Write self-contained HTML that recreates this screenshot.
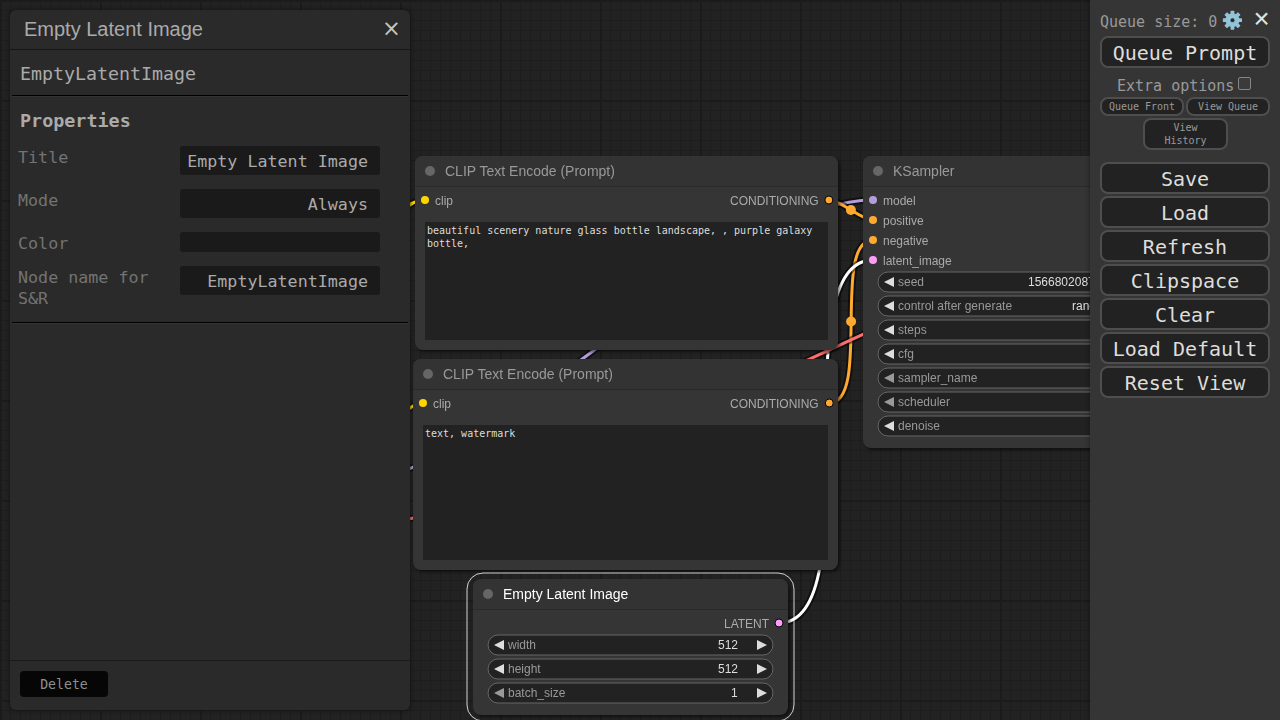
<!DOCTYPE html>
<html lang="en">
<head>
<meta charset="utf-8">
<title>ComfyUI</title>
<style>
*{box-sizing:border-box}
html,body{margin:0;padding:0;width:1280px;height:720px;overflow:hidden;background:#222}
body{position:relative;font-family:"Liberation Sans",sans-serif;color:#aaa}
.mono{font-family:"DejaVu Sans Mono","Liberation Mono",monospace}
#canvas{position:absolute;left:0;top:0;width:1280px;height:720px;overflow:hidden;background-color:#222;
 background-image:
  linear-gradient(to right,#1b1b1b 0,#1b1b1b 2px,transparent 2px),
  linear-gradient(to bottom,#1b1b1b 0,#1b1b1b 2px,transparent 2px),
  linear-gradient(to right,#1d1d1d 0,#1d1d1d 1px,transparent 1px),
  linear-gradient(to bottom,#1d1d1d 0,#1d1d1d 1px,transparent 1px);
 background-size:100px 100px,100px 100px,10px 10px,10px 10px;
 background-position:0 0,0 0,0 0,0 0}
#links{position:absolute;left:0;top:0}
.node{position:absolute;background:#353535;border-radius:8px;box-shadow:2px 2px 3px rgba(0,0,0,.5)}
.node .tt{position:absolute;left:0;top:0;right:0;height:30px;background:#333;border-radius:8px 8px 0 0}
.node .tt:after{content:"";position:absolute;left:0;right:0;top:30px;height:1px;background:#2a2a2a}
.node .tt b{position:absolute;left:10px;top:10px;width:10px;height:10px;border-radius:50%;background:#666}
.node .tt span{position:absolute;left:30px;top:7px;font:14px/16px "Liberation Sans",sans-serif;color:#999;white-space:nowrap}
i.dot{position:absolute;width:8px;height:8px;border-radius:50%}
svg.dot{position:absolute}
.node .tt span,.sl,.wl,.wv{will-change:transform}
.sl{position:absolute;font:12px/14px "Liberation Sans",sans-serif;color:#aaa;white-space:nowrap}
.sl.r{text-align:right}
.ta{position:absolute;display:block;margin:0;border:none;outline:none;resize:none;background:#222;color:#ddd;font:10px/13px "DejaVu Sans Mono","Liberation Mono",monospace;padding:2px;white-space:pre-wrap;overflow:hidden}
.wg{position:absolute;height:20px;font:12px/14px "Liberation Sans",sans-serif}
.wg .ar{position:absolute;left:-1px;top:-1px}
.wg .wl{position:absolute;left:20px;top:3px;color:#999;white-space:nowrap}
.wg .wv{position:absolute;right:35px;top:3px;color:#ddd;white-space:nowrap}
#sel{position:absolute;left:460px;top:566px}
/* panel */
#panel{position:absolute;left:10px;top:10px;width:400px;height:700px;background:#2a2a2a;border-radius:6px;box-shadow:0 0 4px #111;color:#aaa}
#panel .hd{position:absolute;left:0;top:0;width:400px;height:40px;border-bottom:1px solid #161616}
#panel .hd .t{position:absolute;left:14px;top:8px;font:20px/23px "Liberation Sans",sans-serif;color:#aaa;white-space:nowrap}
#panel .hd .x{position:absolute;left:368.5px;top:5.4px;width:26px;height:26px;font:22.5px/26px "DejaVu Sans","Liberation Sans",sans-serif;color:#c4c4c4;text-align:center}
#panel .nt{position:absolute;left:10px;top:52px;font-size:18.3px;line-height:24px;color:#aaa;white-space:nowrap}
#panel .sep{position:absolute;left:2px;width:396px;height:2px;border-top:1px solid #000;border-bottom:1px solid #333}
#panel h3{position:absolute;left:10px;top:99px;margin:0;font-size:18.4px;line-height:24px;font-weight:bold;color:#aaa}
.pn{position:absolute;left:8px;font-size:16.7px;line-height:21px;color:#737373;width:160px}
.pv{position:absolute;left:170px;width:200px;height:29px;background:#1a1a1a;border-radius:3px;font-size:16.7px;line-height:20px;color:#aaa;text-align:right;padding:5px 12px 4px 4px;white-space:nowrap}
#panel .ft{position:absolute;left:0;top:650px;width:400px;height:50px;border-top:1px solid #1a1a1a}
#panel .btn{position:absolute;left:10px;top:10px;width:88px;height:26px;background:#060606;border:0;border-radius:4px;color:#8e8e8e;font-size:13.2px;line-height:26px;padding:1px 0 0;text-align:center}
/* menu */
#menu{position:absolute;left:1090px;top:0;width:190px;height:720px;background:#353535;color:#999}
#msh{position:absolute;left:1084px;top:0;width:6px;height:720px;background:linear-gradient(to right,rgba(0,0,0,0),rgba(0,0,0,.05) 50%,rgba(0,0,0,.22))}
#menu .q{position:absolute;left:10px;top:12px;font-size:15px;line-height:20px;white-space:nowrap;color:#999}
button{margin:0;font-family:inherit;display:block;cursor:pointer}
.mb{position:absolute;left:10px;width:170px;height:32px;background:#222;border:2px solid #4e4e4e;border-radius:8px;color:#ddd;font-size:20px;line-height:28px;padding:1px 0 0;text-align:center;white-space:nowrap}
.sb{position:absolute;background:#222;border:2px solid #4e4e4e;border-radius:8px;color:#999;font-size:10px;line-height:13px;text-align:center;padding:0}
#menu .mx{position:absolute;left:158.6px;top:5.4px;width:26px;height:28px;font:27.6px/28px "Liberation Sans",sans-serif;color:#e2e2e2;text-align:center}
#menu .eo{position:absolute;left:27px;top:76px;font-size:15px;line-height:20px;color:#999;white-space:nowrap}
#menu .cb{position:absolute;left:148px;top:77px;width:13px;height:13px;margin:0;-webkit-appearance:none;appearance:none;border:1px solid #858585;border-radius:2px;background:#3b3b3b}
</style>
</head>
<body>
<div id="canvas">
<svg id="links" width="1280" height="720" viewBox="0 0 1280 720">
<path d="M332.0 508.0C366.7 508.0 388.3 403.0 423.0 403.0" stroke="rgba(0,0,0,0.5)" stroke-width="7" fill="none"/><path d="M332.0 508.0C366.7 508.0 388.3 403.0 423.0 403.0" stroke="#FFD500" stroke-width="3" fill="none"/><circle cx="377.5" cy="455.5" r="5" fill="#FFD500"/>
<path d="M332.0 508.0C412.4 508.0 344.6 200.0 425.0 200.0" stroke="rgba(0,0,0,0.5)" stroke-width="7" fill="none"/><path d="M332.0 508.0C412.4 508.0 344.6 200.0 425.0 200.0" stroke="#FFD500" stroke-width="3" fill="none"/><circle cx="378.5" cy="354.0" r="5" fill="#FFD500"/>
<path d="M332.0 488.0C485.2 488.0 719.8 200.0 873.0 200.0" stroke="rgba(0,0,0,0.5)" stroke-width="7" fill="none"/><path d="M332.0 488.0C485.2 488.0 719.8 200.0 873.0 200.0" stroke="#B39DDB" stroke-width="3" fill="none"/><circle cx="602.5" cy="344.0" r="5" fill="#B39DDB"/>
<path d="M828.9 200.0C841.0 200.0 860.9 220.0 873.0 220.0" stroke="rgba(0,0,0,0.5)" stroke-width="7" fill="none"/><path d="M828.9 200.0C841.0 200.0 860.9 220.0 873.0 220.0" stroke="#FFA931" stroke-width="3" fill="none"/><circle cx="850.9" cy="210.0" r="5" fill="#FFA931"/>
<path d="M829.3 403.0C871.5 403.0 830.8 240.0 873.0 240.0" stroke="rgba(0,0,0,0.5)" stroke-width="7" fill="none"/><path d="M829.3 403.0C871.5 403.0 830.8 240.0 873.0 240.0" stroke="#FFA931" stroke-width="3" fill="none"/><circle cx="851.1" cy="321.5" r="5" fill="#FFA931"/>
<path d="M779.0 623.0C872.7 623.0 779.3 260.0 873.0 260.0" stroke="rgba(0,0,0,0.5)" stroke-width="7" fill="none"/><path d="M779.0 623.0C872.7 623.0 779.3 260.0 873.0 260.0" stroke="#FFFFFF" stroke-width="3" fill="none"/><circle cx="826.0" cy="441.5" r="5" fill="#FFFFFF"/>
<path d="M332.0 528.0C566.6 528.0 984.4 222.0 1219.0 222.0" stroke="rgba(0,0,0,0.5)" stroke-width="7" fill="none"/><path d="M332.0 528.0C566.6 528.0 984.4 222.0 1219.0 222.0" stroke="#FF6E6E" stroke-width="3" fill="none"/><circle cx="775.5" cy="375.0" r="5" fill="#FF6E6E"/>
</svg>

<div class="node" style="left:415px;top:156px;width:423px;height:194px">
 <div class="tt"><b></b><span>CLIP Text Encode (Prompt)</span></div>
 <i class="dot" style="left:6px;top:40px;background:#FFD500"></i><span class="sl" style="left:20px;top:38px">clip</span><svg class="dot" style="left:407px;top:38px" width="12" height="12" viewBox="0 0 12 12"><circle cx="6.85" cy="6" r="4" fill="#FFA931" stroke="#000" stroke-width="1"/></svg><span class="sl r" style="right:19.0px;top:38px">CONDITIONING</span>
 <textarea class="ta" spellcheck="false" readonly style="left:10px;top:66px;width:403px;height:118px">beautiful scenery nature glass bottle landscape, , purple galaxy bottle,</textarea>
</div>

<div class="node" style="left:413px;top:359px;width:425px;height:211px">
 <div class="tt"><b></b><span>CLIP Text Encode (Prompt)</span></div>
 <i class="dot" style="left:6px;top:40px;background:#FFD500"></i><span class="sl" style="left:20px;top:38px">clip</span><svg class="dot" style="left:410px;top:38px" width="12" height="12" viewBox="0 0 12 12"><circle cx="6.28" cy="6" r="4" fill="#FFA931" stroke="#000" stroke-width="1"/></svg><span class="sl r" style="right:19.0px;top:38px">CONDITIONING</span>
 <textarea class="ta" spellcheck="false" readonly style="left:10px;top:66px;width:405px;height:135px">text, watermark</textarea>
</div>

<div class="node" style="left:863px;top:156px;width:315px;height:292px">
 <div class="tt"><b></b><span>KSampler</span></div>
 <i class="dot" style="left:6px;top:40px;background:#B39DDB"></i><span class="sl" style="left:20px;top:38px">model</span><i class="dot" style="left:6px;top:60px;background:#FFA931"></i><span class="sl" style="left:20px;top:58px">positive</span><i class="dot" style="left:6px;top:80px;background:#FFA931"></i><span class="sl" style="left:20px;top:78px">negative</span><i class="dot" style="left:6px;top:100px;background:#FF9CF9"></i><span class="sl" style="left:20px;top:98px">latent_image</span>
 <div class="wg" style="left:15px;top:116px;width:285px"><svg class="ar" width="287" height="22" viewBox="-1 -1 287 22"><rect x="0" y="0" width="285" height="20" rx="10" ry="10" fill="#222" stroke="#666" stroke-width="1"/><path d="M16 5L6 10L16 15Z" fill="#ddd"/><path d="M269 5L279 10L269 15Z" fill="#ddd"/></svg><span class="wl">seed</span><span class="wv">156680208700286</span></div><div class="wg" style="left:15px;top:140px;width:285px"><svg class="ar" width="287" height="22" viewBox="-1 -1 287 22"><rect x="0" y="0" width="285" height="20" rx="10" ry="10" fill="#222" stroke="#666" stroke-width="1"/><path d="M16 5L6 10L16 15Z" fill="#ddd"/><path d="M269 5L279 10L269 15Z" fill="#ddd"/></svg><span class="wl">control after generate</span><span class="wv">randomize</span></div><div class="wg" style="left:15px;top:164px;width:285px"><svg class="ar" width="287" height="22" viewBox="-1 -1 287 22"><rect x="0" y="0" width="285" height="20" rx="10" ry="10" fill="#222" stroke="#666" stroke-width="1"/><path d="M16 5L6 10L16 15Z" fill="#ddd"/><path d="M269 5L279 10L269 15Z" fill="#ddd"/></svg><span class="wl">steps</span><span class="wv">20</span></div><div class="wg" style="left:15px;top:188px;width:285px"><svg class="ar" width="287" height="22" viewBox="-1 -1 287 22"><rect x="0" y="0" width="285" height="20" rx="10" ry="10" fill="#222" stroke="#666" stroke-width="1"/><path d="M16 5L6 10L16 15Z" fill="#ddd"/><path d="M269 5L279 10L269 15Z" fill="#ddd"/></svg><span class="wl">cfg</span><span class="wv">8.0</span></div><div class="wg" style="left:15px;top:212px;width:285px"><svg class="ar" width="287" height="22" viewBox="-1 -1 287 22"><rect x="0" y="0" width="285" height="20" rx="10" ry="10" fill="#222" stroke="#666" stroke-width="1"/><path d="M16 5L6 10L16 15Z" fill="#999"/><path d="M269 5L279 10L269 15Z" fill="#ddd"/></svg><span class="wl">sampler_name</span><span class="wv">euler</span></div><div class="wg" style="left:15px;top:236px;width:285px"><svg class="ar" width="287" height="22" viewBox="-1 -1 287 22"><rect x="0" y="0" width="285" height="20" rx="10" ry="10" fill="#222" stroke="#666" stroke-width="1"/><path d="M16 5L6 10L16 15Z" fill="#999"/><path d="M269 5L279 10L269 15Z" fill="#ddd"/></svg><span class="wl">scheduler</span><span class="wv">normal</span></div><div class="wg" style="left:15px;top:260px;width:285px"><svg class="ar" width="287" height="22" viewBox="-1 -1 287 22"><rect x="0" y="0" width="285" height="20" rx="10" ry="10" fill="#222" stroke="#666" stroke-width="1"/><path d="M16 5L6 10L16 15Z" fill="#ddd"/><path d="M269 5L279 10L269 15Z" fill="#ddd"/></svg><span class="wl">denoise</span><span class="wv">1.00</span></div>
</div>

<svg id="sel" width="340" height="154" viewBox="0 0 340 154"><rect x="7" y="7" width="327" height="148" rx="16" ry="16" fill="none" stroke="rgba(255,255,255,.8)" stroke-width="1"/></svg>
<div class="node" style="left:473px;top:579px;width:315px;height:136px">
 <div class="tt"><b></b><span style="color:#fff">Empty Latent Image</span></div>
 <svg class="dot" style="left:300px;top:38px" width="12" height="12" viewBox="0 0 12 12"><circle cx="6.00" cy="6" r="4" fill="#FF9CF9" stroke="#000" stroke-width="1"/></svg><span class="sl r" style="right:19.0px;top:38px">LATENT</span>
 <div class="wg" style="left:15px;top:56px;width:285px"><svg class="ar" width="287" height="22" viewBox="-1 -1 287 22"><rect x="0" y="0" width="285" height="20" rx="10" ry="10" fill="#222" stroke="#666" stroke-width="1"/><path d="M16 5L6 10L16 15Z" fill="#ddd"/><path d="M269 5L279 10L269 15Z" fill="#ddd"/></svg><span class="wl">width</span><span class="wv">512</span></div><div class="wg" style="left:15px;top:80px;width:285px"><svg class="ar" width="287" height="22" viewBox="-1 -1 287 22"><rect x="0" y="0" width="285" height="20" rx="10" ry="10" fill="#222" stroke="#666" stroke-width="1"/><path d="M16 5L6 10L16 15Z" fill="#ddd"/><path d="M269 5L279 10L269 15Z" fill="#ddd"/></svg><span class="wl">height</span><span class="wv">512</span></div><div class="wg" style="left:15px;top:104px;width:285px"><svg class="ar" width="287" height="22" viewBox="-1 -1 287 22"><rect x="0" y="0" width="285" height="20" rx="10" ry="10" fill="#222" stroke="#666" stroke-width="1"/><path d="M16 5L6 10L16 15Z" fill="#999"/><path d="M269 5L279 10L269 15Z" fill="#ddd"/></svg><span class="wl">batch_size</span><span class="wv">1</span></div>
</div>
</div>

<div id="panel" class="mono">
 <div class="hd"><span class="t">Empty Latent Image</span>
  <span class="x">×</span>
 </div>
 <div class="nt">EmptyLatentImage</div>
 <div class="sep" style="top:85px"></div>
 <h3>Properties</h3>
 <div class="pn" style="top:137px">Title</div><div class="pv" style="top:136px">Empty Latent Image</div>
 <div class="pn" style="top:180px">Mode</div><div class="pv" style="top:179px">Always</div>
 <div class="pn" style="top:223px">Color</div><div class="pv" style="top:222px;height:20px"></div>
 <div class="pn" style="top:257px">Node name for S&amp;R</div><div class="pv" style="top:256px">EmptyLatentImage</div>
 <div class="sep" style="top:312px"></div>
 <div class="ft"><button class="btn">Delete</button></div>
</div>

<div id="msh"></div>
<div id="menu" class="mono">
 <div class="q">Queue size: 0</div>
 <svg style="position:absolute;left:132px;top:10px" width="22" height="22" viewBox="0 0 22 22"><g transform="translate(10.45 10.2) scale(.995) translate(-10 -10)"><g fill="#93c3d7"><circle cx="10" cy="10" r="7"/><rect x="8.1" y="0.4" width="3.8" height="19.2" rx="0.5"/><rect x="8.1" y="0.4" width="3.8" height="19.2" rx="0.5" transform="rotate(45 10 10)"/><rect x="8.1" y="0.4" width="3.8" height="19.2" rx="0.5" transform="rotate(90 10 10)"/><rect x="8.1" y="0.4" width="3.8" height="19.2" rx="0.5" transform="rotate(135 10 10)"/></g><circle cx="10" cy="10" r="3.7" fill="#a9d6e6"/><circle cx="10.2" cy="10.2" r="3.1" fill="#7fb4ca"/><circle cx="10" cy="10" r="1.9" fill="#2b2b2b"/></g></svg>
 <span class="mx">×</span>
 <button class="mb" style="top:36px">Queue Prompt</button>
 <label class="eo" for="extra">Extra options</label><input id="extra" class="cb" type="checkbox">
 <button class="sb" style="left:10px;top:97px;width:84px;height:19px">Queue Front</button>
 <button class="sb" style="left:96px;top:97px;width:84px;height:19px">View Queue</button>
 <button class="sb" style="left:53px;top:118px;width:85px;height:32px">View<br>History</button>
 <button class="mb" style="top:162px">Save</button>
 <button class="mb" style="top:196px">Load</button>
 <button class="mb" style="top:230px">Refresh</button>
 <button class="mb" style="top:264px">Clipspace</button>
 <button class="mb" style="top:298px">Clear</button>
 <button class="mb" style="top:332px">Load Default</button>
 <button class="mb" style="top:366px">Reset View</button>
</div>
</body>
</html>
